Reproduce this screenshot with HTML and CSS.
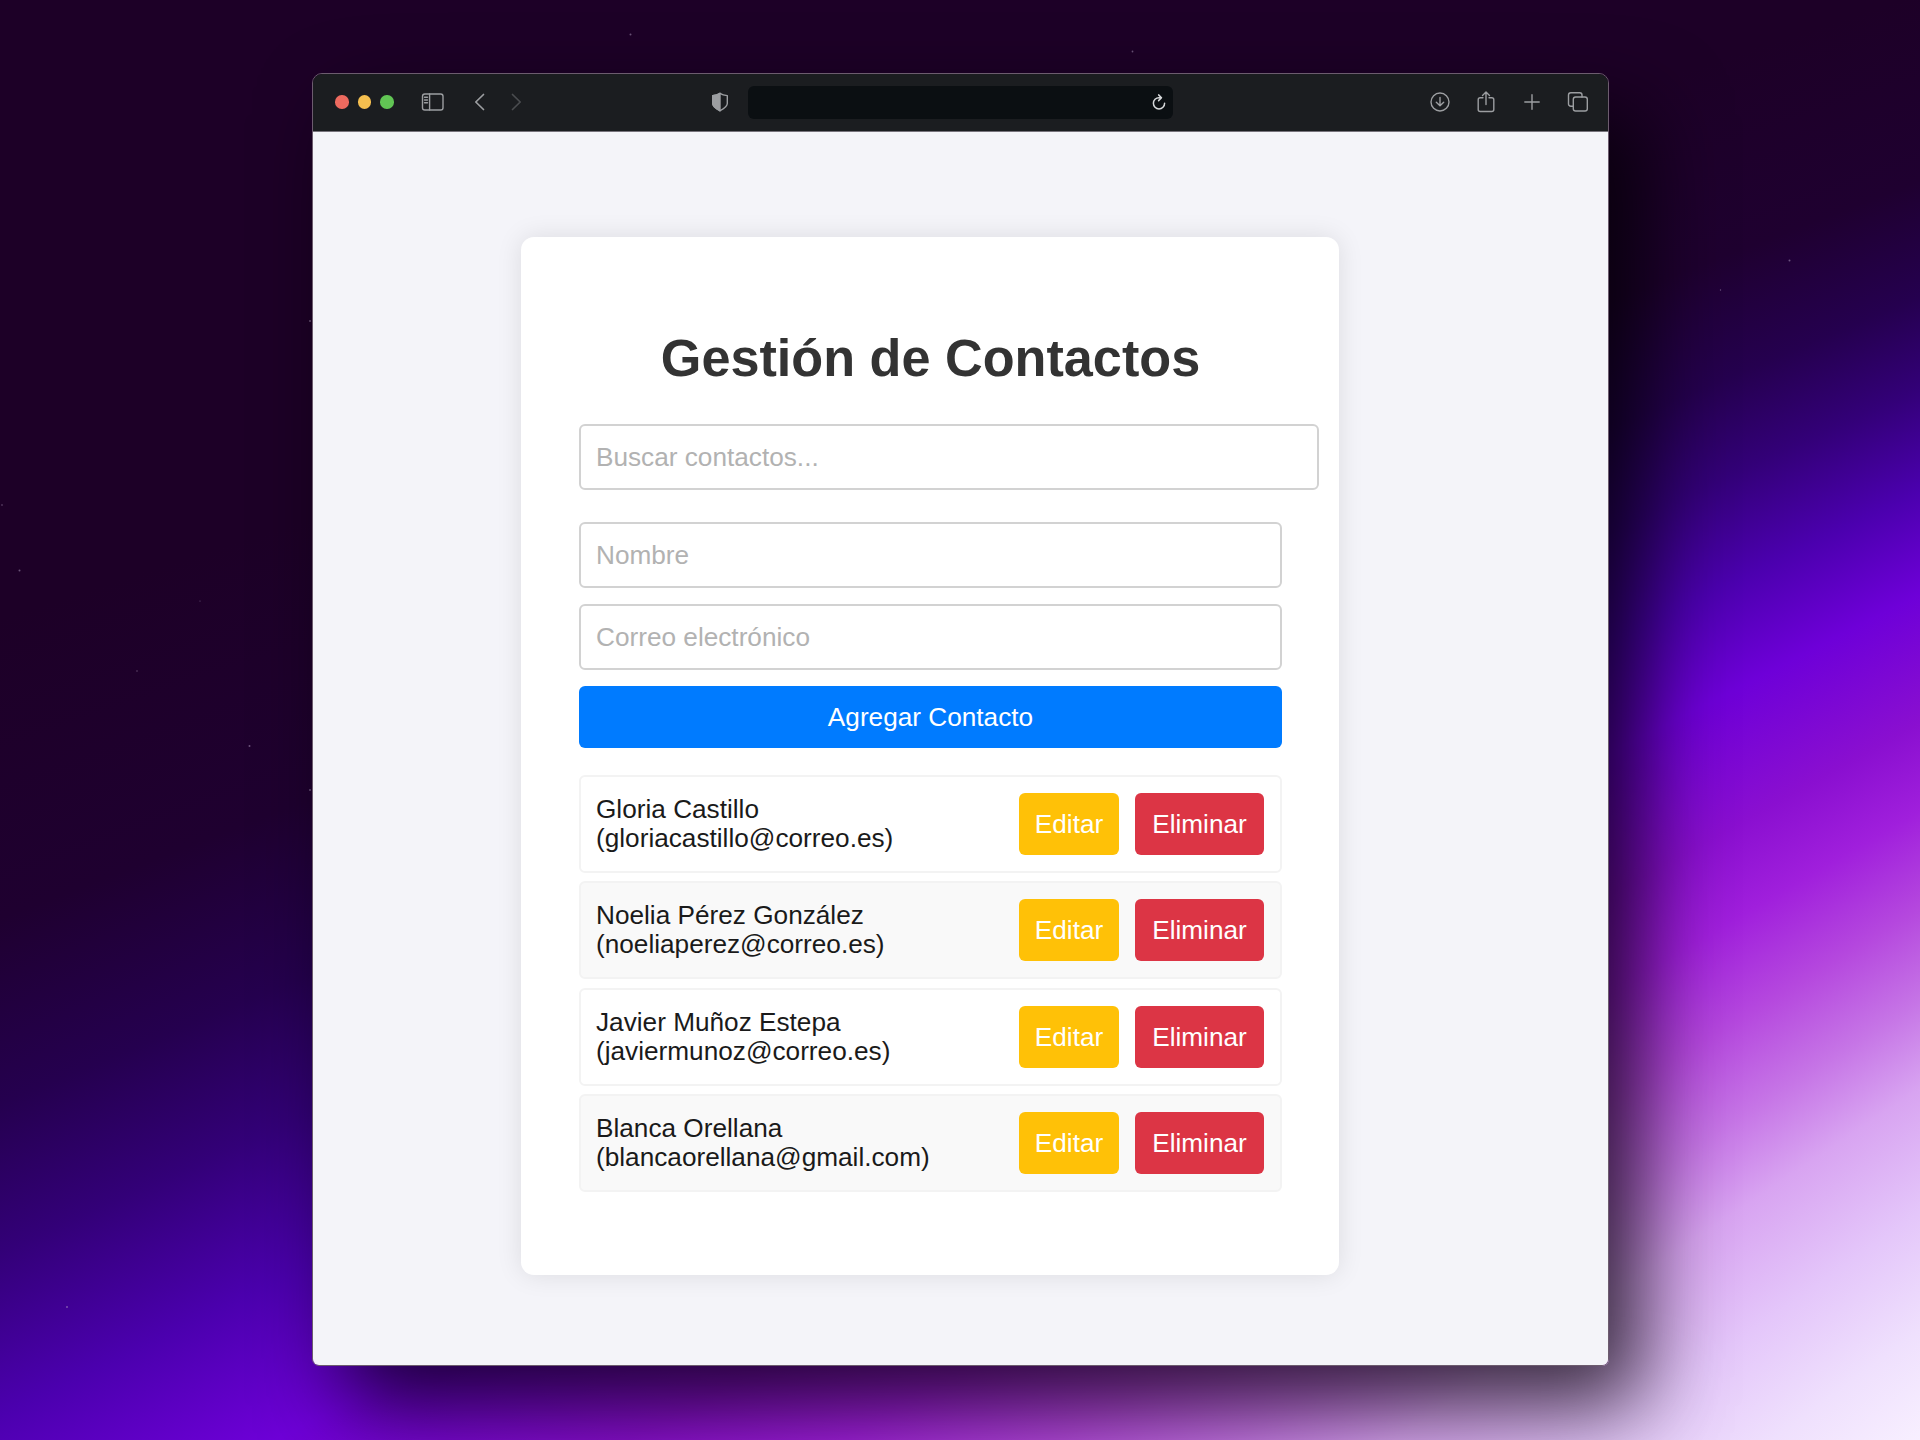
FILE: index.html
```html
<!DOCTYPE html>
<html lang="es">
<head>
<meta charset="utf-8">
<title>Gestión de Contactos</title>
<link rel="stylesheet" href="styles.css">
</head>
<body>
<svg class="stars" viewBox="0 0 1920 1440" aria-hidden="true">
  <g fill="#b9a6c9" opacity=".5">
    <circle cx="630.500" cy="34.500" r="1"/><circle cx="1132.500" cy="51.500" r=".9"/><circle cx="1789.500" cy="260.500" r="1"/>
    <circle cx="19.500" cy="570.500" r="1"/><circle cx="249.500" cy="746" r="1"/><circle cx="67" cy="1307" r="1"/>
    <circle cx="137" cy="671" r=".7"/><circle cx="2" cy="505" r=".8"/><circle cx="1720.500" cy="290" r=".7"/>
    <circle cx="310" cy="321" r="1"/><circle cx="310" cy="790" r="1"/><circle cx="200" cy="601" r=".6"/>
  </g>
</svg>
<main class="window">
  <header class="toolbar">
    <div class="group lights"><i class="dot red"></i><i class="dot amber"></i><i class="dot green"></i></div>
    <svg class="icon sidebar" width="24" height="20" viewBox="0 0 24 20"><rect x="1.500" y="2" width="20.500" height="16" rx="2.300"/><path d="M8.600 2v16M3.500 5.300h3M3.500 8h3M3.500 10.700h3"/></svg>
    <svg class="icon back" width="12" height="20" viewBox="0 0 12 20"><path d="M9.500 2.500 1.800 10l7.700 7.500"/></svg>
    <svg class="icon forward" width="12" height="20" viewBox="0 0 12 20"><path d="M2.500 2.500 10.200 10l-7.700 7.500"/></svg>
    <svg class="icon shield" width="18" height="20" viewBox="0 0 18 20"><path d="M9 1.300c2.300 1.500 4.500 2 7.300 2.300v8c0 3.300-4 5.400-7.300 7.200-3.300-1.800-7.300-3.900-7.300-7.200v-8C4.500 3.300 6.700 2.800 9 1.300z"/><path class="fill" d="M9 1.300v17.500c-3.300-1.800-7.300-3.900-7.300-7.200v-8C4.500 3.300 6.700 2.800 9 1.300z"/></svg>
    <div class="address">
      <svg class="icon reload" width="16" height="18" viewBox="0 0 16 18"><path d="M13.600 10.300A5.600 5.600 0 1 1 8 4.700h2.300M7.600 1.900l2.900 2.800-2.900 2.900"/></svg>
    </div>
    <div class="group actions">
      <svg class="icon" width="22" height="22" viewBox="0 0 22 22"><circle cx="11" cy="11" r="9"/><path d="M11 6.500v8M7.300 11.300l3.700 3.500 3.700-3.500"/></svg>
      <svg class="icon" width="20" height="22" viewBox="0 0 20 22"><path d="M7 6.800H4.200a2 2 0 0 0-2 2v9.700a2 2 0 0 0 2 2h11.600a2 2 0 0 0 2-2V8.800a2 2 0 0 0-2-2H13M10 13.500V1.500M6.500 4.600 10 1.100l3.500 3.500"/></svg>
      <svg class="icon" width="18" height="22" viewBox="0 0 18 22"><path d="M1.800 11h14.400M9 3.800v14.400"/></svg>
      <svg class="icon" width="22" height="22" viewBox="0 0 22 22"><rect x="6.300" y="6" width="14" height="14" rx="2.300"/><path d="M6 15.200H3.800a2.300 2.300 0 0 1-2.300-2.300V4A2.300 2.300 0 0 1 3.800 1.700h9A2.300 2.300 0 0 1 15 4v2"/></svg>
    </div>
  </header>
  <section class="page">
    <div class="card">
      <h1 class="title">Gestión de Contactos</h1>
      <input class="field search" type="text" placeholder="Buscar contactos...">
      <form class="form">
        <input class="field" type="text" placeholder="Nombre">
        <input class="field" type="email" placeholder="Correo electrónico">
        <button class="btn add" type="button">Agregar Contacto</button>
      </form>
      <ul class="list">
        <li class="item"><span class="who">Gloria Castillo<br>(gloriacastillo@correo.es)</span><button class="btn edit">Editar</button><button class="btn del">Eliminar</button></li>
        <li class="item"><span class="who">Noelia Pérez González<br>(noeliaperez@correo.es)</span><button class="btn edit">Editar</button><button class="btn del">Eliminar</button></li>
        <li class="item"><span class="who">Javier Muñoz Estepa<br>(javiermunoz@correo.es)</span><button class="btn edit">Editar</button><button class="btn del">Eliminar</button></li>
        <li class="item"><span class="who">Blanca Orellana<br>(blancaorellana@gmail.com)</span><button class="btn edit">Editar</button><button class="btn del">Eliminar</button></li>
      </ul>
    </div>
  </section>
</main>
</body>
</html>
```
FILE: styles.css
```css
* { box-sizing: border-box; }

body {
  margin: 0;
  width: 1920px;
  height: 1440px;
  overflow: hidden;
  padding: 73px 311px 0 312px;
  font-family: "Liberation Sans", Arial, sans-serif;
  background: conic-gradient(from 232deg at 5100px -1040px,
    #f8f0ff 0deg, #efe0fd 1.3deg, #e4c6fa 2.7deg, #d8a4f1 4.2deg, #c675e6 5.3deg, #b548de 6.5deg,
    #a01fdc 7.8deg, #8a0fd0 9deg, #6e00d8 10.800deg, #4b00ae 12.3deg,
    #330078 13.800deg, #25004f 15.2deg, #1f0030 17deg, #1d0027 20deg, #1d0027 360deg);
}

.stars { position: absolute; left: 0; top: 0; width: 1920px; height: 1440px; }

/* browser window */
.window {
  position: relative;
  height: 1293px;
  border: 1px solid #6c5c6e;
  border-radius: 10px 10px 7px 7px;
  overflow: hidden;
  display: flex;
  flex-direction: column;
  box-shadow: 33px 40px 84px rgba(0, 0, 0, .75);
}

.toolbar {
  height: 58px;
  flex: none;
  display: flex;
  align-items: center;
  padding: 0 19px 1px 22px;
  background: #1b1d20;
  border-bottom: 1px solid #77737c;
}
.group { display: flex; align-items: center; }
.lights { gap: 9px; }
.dot { width: 13.500px; height: 13.500px; border-radius: 50%; }
.red { background: #ed6a5f; }
.amber { background: #f5bf4f; }
.green { background: #61c554; }

.icon { fill: none; stroke: #9c9ea1; stroke-width: 1.400; flex: none; stroke-linecap: round; stroke-linejoin: round; }
.sidebar { margin-left: 27px; }
.back { margin-left: 29px; stroke-width: 1.700; }
.forward { margin-left: 24px; stroke: #4a4c4f; stroke-width: 1.700; }
.shield { margin-left: 189px; }
.shield .fill { fill: #9c9ea1; }
.address {
  width: 425px;
  height: 33px;
  margin-left: 19px;
  border-radius: 6px;
  background: #0b0f12;
  display: flex;
  align-items: center;
  justify-content: flex-end;
  padding-right: 6px;
}
.reload { stroke: #d6d8da; stroke-width: 1.500; }
.actions { margin-left: auto; gap: 25px; }
.actions .icon:nth-child(3) { margin: 0 1px 0 2px; }

.page { flex: 1; padding: 105px 0 0 208px; background: #f4f4f9; }

.card {
  width: 818px;
  height: 1038px;
  padding: 91px 57px 0 58px;
  border-radius: 13px;
  background: #fff;
  box-shadow: 0 0 26px rgba(0, 0, 0, .1);
}
.title {
  margin: 0 0 36px;
  height: 60px;
  font-size: 52.200px;
  line-height: 60px;
  text-align: center;
  color: #333;
}
.field {
  display: block;
  width: 100%;
  height: 66px;
  padding: 0 15px;
  border: 2px solid #d2d2d2;
  border-radius: 6px;
  background: #fff;
  font: 26.200px "Liberation Sans", Arial, sans-serif;
}
.field::placeholder { color: #b2b2b2; opacity: 1; }
.search { width: 740px; margin-bottom: 32px; }

.form { display: grid; gap: 16px; }

.btn {
  height: 62px;
  padding: 0 16px;
  border: 0;
  border-radius: 6px;
  color: #fff;
  font: 26.200px "Liberation Sans", Arial, sans-serif;
}
.add { background: #007bff; }

.list { margin: 27px 0 0; padding: 0; list-style: none; display: grid; gap: 8px; }
.item {
  height: 98px;
  display: flex;
  align-items: center;
  padding: 0 16px 0 15px;
  border: 2px solid #f3f3f3;
  border-radius: 6px;
}
.item:nth-child(even) { background: #f9f9f9; }
.item:nth-child(3) { margin-top: 1px; }
.who { flex: 1; font-size: 26.200px; line-height: 29.300px; color: #1a1a1a; }
.edit { width: 100px; margin-right: 16px; padding: 0; background: #ffc107; }
.del { width: 129px; padding: 0; background: #dc3545; }
```
